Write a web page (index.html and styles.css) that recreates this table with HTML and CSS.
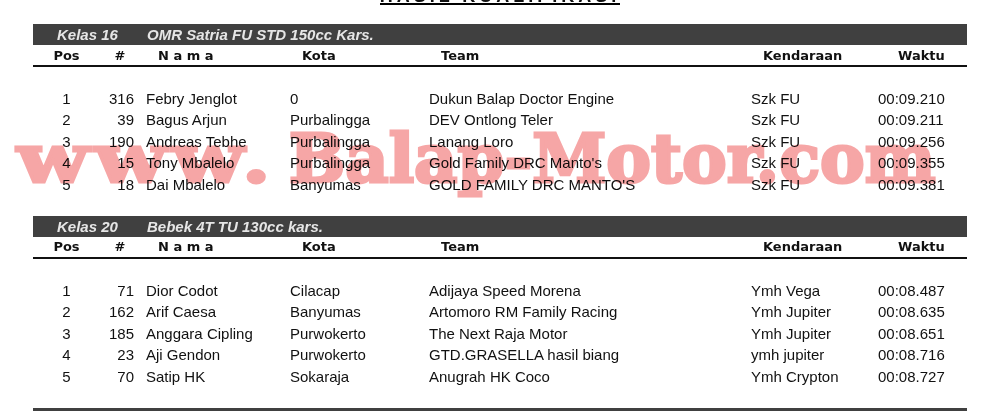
FILE: index.html
```html
<!DOCTYPE html>
<html>
<head>
<meta charset="utf-8">
<link rel="stylesheet" href="styles.css">
</head>
<body>
<div class="page">
  <div class="title-wrap"><span class="title">HASIL KUALIFIKASI</span></div>

  <section class="klass">
    <div class="bar"><span class="bar-k">Kelas 16</span><span>OMR Satria FU STD 150cc Kars.</span></div>
    <div class="row head">
      <div class="c-pos">Pos</div><div class="c-num">#</div><div class="c-t">N a m a</div><div class="c-t">Kota</div><div class="c-t">Team</div><div class="c-t">Kendaraan</div><div class="c-t c-w">Waktu</div>
    </div>
    <div class="blank"></div>
    <div class="row data"><div class="c-pos">1</div><div class="c-num">316</div><div class="c-t">Febry Jenglot</div><div class="c-t">0</div><div class="c-t">Dukun Balap Doctor Engine</div><div class="c-t">Szk FU</div><div class="c-t">00:09.210</div></div>
    <div class="row data"><div class="c-pos">2</div><div class="c-num">39</div><div class="c-t">Bagus Arjun</div><div class="c-t">Purbalingga</div><div class="c-t">DEV Ontlong Teler</div><div class="c-t">Szk FU</div><div class="c-t">00:09.211</div></div>
    <div class="row data"><div class="c-pos">3</div><div class="c-num">190</div><div class="c-t">Andreas Tebhe</div><div class="c-t">Purbalingga</div><div class="c-t">Lanang Loro</div><div class="c-t">Szk FU</div><div class="c-t">00:09.256</div></div>
    <div class="row data"><div class="c-pos">4</div><div class="c-num">15</div><div class="c-t">Tony Mbalelo</div><div class="c-t">Purbalingga</div><div class="c-t">Gold Family DRC Manto's</div><div class="c-t">Szk FU</div><div class="c-t">00:09.355</div></div>
    <div class="row data"><div class="c-pos">5</div><div class="c-num">18</div><div class="c-t">Dai Mbalelo</div><div class="c-t">Banyumas</div><div class="c-t">GOLD FAMILY DRC MANTO'S</div><div class="c-t">Szk FU</div><div class="c-t">00:09.381</div></div>
    <div class="blank"></div>
  </section>

  <section class="klass">
    <div class="bar"><span class="bar-k">Kelas 20</span><span>Bebek 4T TU 130cc kars.</span></div>
    <div class="row head">
      <div class="c-pos">Pos</div><div class="c-num">#</div><div class="c-t">N a m a</div><div class="c-t">Kota</div><div class="c-t">Team</div><div class="c-t">Kendaraan</div><div class="c-t c-w">Waktu</div>
    </div>
    <div class="blank"></div>
    <div class="row data"><div class="c-pos">1</div><div class="c-num">71</div><div class="c-t">Dior Codot</div><div class="c-t">Cilacap</div><div class="c-t">Adijaya Speed Morena</div><div class="c-t">Ymh Vega</div><div class="c-t">00:08.487</div></div>
    <div class="row data"><div class="c-pos">2</div><div class="c-num">162</div><div class="c-t">Arif Caesa</div><div class="c-t">Banyumas</div><div class="c-t">Artomoro RM Family Racing</div><div class="c-t">Ymh Jupiter</div><div class="c-t">00:08.635</div></div>
    <div class="row data"><div class="c-pos">3</div><div class="c-num">185</div><div class="c-t">Anggara Cipling</div><div class="c-t">Purwokerto</div><div class="c-t">The Next Raja Motor</div><div class="c-t">Ymh Jupiter</div><div class="c-t">00:08.651</div></div>
    <div class="row data"><div class="c-pos">4</div><div class="c-num">23</div><div class="c-t">Aji Gendon</div><div class="c-t">Purwokerto</div><div class="c-t">GTD.GRASELLA hasil biang</div><div class="c-t">ymh jupiter</div><div class="c-t">00:08.716</div></div>
    <div class="row data"><div class="c-pos">5</div><div class="c-num">70</div><div class="c-t">Satip HK</div><div class="c-t">Sokaraja</div><div class="c-t">Anugrah HK Coco</div><div class="c-t">Ymh Crypton</div><div class="c-t">00:08.727</div></div>
    <div class="blank"></div>
  </section>

  <div class="bar bar-end"></div>

  <div class="watermark"><span class="wm-www">www.</span><span class="wm-rest">Balap-Motor.com</span></div>
</div>
</body>
</html>
```

FILE: styles.css
```css
html, body {
  margin: 0;
  padding: 0;
  background: #fff;
  overflow: hidden;
}

.page {
  display: flow-root;
  position: relative;
  width: 934px;
  margin-left: 33px;
  font-family: "Liberation Sans", Arial, sans-serif;
  font-size: 15px;
  color: #111;
}

.title-wrap {
  display: flex;
  justify-content: center;
  height: 15px;
  margin-top: -10px;
  margin-bottom: 19px;
}

.title {
  display: block;
  font-family: "Liberation Sans", Arial, sans-serif;
  font-weight: bold;
  font-size: 18px;
  line-height: 13px;
  letter-spacing: 4px;
  white-space: nowrap;
  border-bottom: 2px solid #000;
}

.bar {
  height: 21px;
  background: #404040;
  color: #e6e6e6;
  font-weight: bold;
  font-style: italic;
  font-size: 15px;
  display: flex;
  align-items: center;
  padding-left: 24px;
}

.bar-k {
  width: 90px;
}

.bar-end {
  height: 8px;
  padding: 0;
}

.row {
  display: grid;
  grid-template-columns: 67px 40px 144px 139px 322px 127px 95px;
  align-items: center;
}

.head {
  height: 20px;
  border-bottom: 2px solid #111;
  font-family: "DejaVu Sans", Verdana, sans-serif;
  font-weight: bold;
  font-size: 13px;
  color: #111;
}

.head .c-pos,
.head .c-num {
  text-align: center;
}

.head .c-t {
  padding-left: 18px;
}

.head .c-w {
  padding-left: 26px;
}

.blank {
  height: 21px;
}

.data {
  height: 21.4px;
  line-height: 21.4px;
  white-space: nowrap;
}

.data .c-pos {
  text-align: center;
}

.data .c-num {
  text-align: right;
  padding-right: 6px;
}

.data .c-t {
  padding-left: 6px;
}

.watermark {
  position: absolute;
  left: -16px;
  top: 125px;
  font-family: "DejaVu Serif", Georgia, serif;
  font-weight: bold;
  font-size: 67px;
  line-height: 67px;
  color: #f6a6a6;
  -webkit-text-stroke: 3px #f6a6a6;
  mix-blend-mode: multiply;
  white-space: nowrap;
  pointer-events: none;
}

.wm-www {
  display: inline-block;
  letter-spacing: 5px;
  transform: scaleX(1.24);
  transform-origin: left center;
  margin-right: 62px;
}

.wm-rest {
  letter-spacing: 0;
}
```
